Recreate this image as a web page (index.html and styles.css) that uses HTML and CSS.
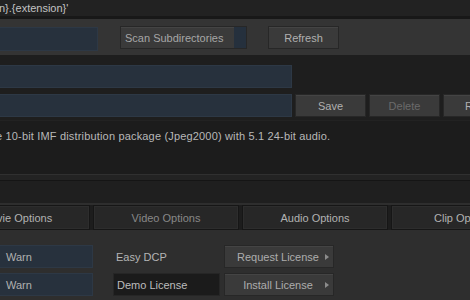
FILE: index.html
```html
<!DOCTYPE html>
<html>
<head>
<meta charset="utf-8">
<link rel="stylesheet" href="styles.css">
</head>
<body>
<div class="screen">
  <div class="pathbar"><span class="path">n}.{extension}'</span></div>

  <div class="toolbar">
    <div class="field dir"></div>
    <button class="btn scan"><span class="scan-label">Scan Subdirectories</span><span class="scan-on"></span></button>
    <button class="btn refresh">Refresh</button>
  </div>

  <div class="presets">
    <div class="preset-row">
      <div class="field preset"></div>
    </div>
    <div class="preset-row">
      <div class="field preset"></div>
      <button class="btn pbtn">Save</button>
      <button class="btn pbtn disabled">Delete</button>
      <button class="btn pbtn">Rename</button>
    </div>
  </div>

  <div class="desc"><span class="desc-text">e 10-bit IMF distribution package (Jpeg2000) with 5.1 24-bit audio.</span></div>

  <div class="sep"></div>
  <div class="emptybar"></div>

  <div class="tabs">
    <div class="tab">Movie Options</div>
    <div class="tab dim">Video Options</div>
    <div class="tab">Audio Options</div>
    <div class="tab">Clip Options</div>
  </div>

  <div class="options">
    <div class="opt-row">
      <div class="field warn">Warn</div>
      <div class="label">Easy DCP</div>
      <button class="btn lic">Request License<span class="arrow"></span></button>
    </div>
    <div class="opt-row">
      <div class="field warn">Warn</div>
      <div class="label demo">Demo License</div>
      <button class="btn lic">Install License<span class="arrow"></span></button>
    </div>
  </div>
</div>
</body>
</html>
```

FILE: styles.css
```css
* { box-sizing: border-box; }

body {
  margin: 0;
  background: #1f1f1f;
  font-family: "Liberation Sans", Arial, sans-serif;
  font-size: 11px;
  color: #bcbcbc;
}

.screen {
  width: 470px;
  height: 300px;
  overflow: hidden;
}

.pathbar {
  height: 19px;
  background: #222222;
  border-bottom: 3px solid #181818;
  line-height: 17px;
  white-space: nowrap;
  color: #c2c2c2;
}

.path { margin-left: -1px; }

.field {
  background: #27313d;
  border: 1px solid #2d3845;
}

.toolbar {
  height: 36px;
  background: #343434;
  display: flex;
  align-items: flex-start;
  padding-top: 7px;
}

.dir {
  width: 108px;
  height: 24px;
  margin-left: -10px;
  margin-top: 1px;
}

.btn {
  font: inherit;
  height: 23px;
  padding: 0;
  background: #3a3a3a;
  border: 1px solid #272727;
  box-shadow: inset 0 1px 0 #444444;
  color: #b0b0b0;
  display: flex;
  align-items: center;
  justify-content: center;
  white-space: nowrap;
  overflow: hidden;
}

.scan {
  width: 127px;
  margin-left: 22px;
  justify-content: space-between;
  align-items: stretch;
  color: #a6a6a6;
}

.scan-label {
  padding-left: 4px;
  display: flex;
  align-items: center;
}

.scan-on {
  width: 12px;
  background: #25303d;
}

.refresh {
  width: 71px;
  margin-left: 21px;
}

.presets {
  padding: 10px 0 3px;
  background: #1e1e1e;
}

.preset-row {
  display: flex;
  gap: 3px;
  height: 23px;
}

.preset-row + .preset-row {
  margin-top: 6px;
}

.preset {
  width: 302px;
  margin-left: -10px;
  flex: none;
  height: 23px;
}

.pbtn {
  width: 71px;
  flex: none;
  justify-content: center;
}

.pbtn:last-child {
  justify-content: flex-start;
  padding-left: 21px;
}

.disabled { color: #6a6a6a; }

.desc {
  height: 54px;
  background: #1c1c1c;
  border-top: 1px solid #222222;
  padding-top: 8px;
  line-height: 14px;
  white-space: nowrap;
  color: #b8b8b8;
}

.desc-text {
  margin-left: -4px;
  letter-spacing: 0.17px;
}

.sep {
  height: 7px;
  background: #232323;
  border-top: 1px solid #303030;
  border-bottom: 1px solid #151515;
}

.emptybar {
  height: 24px;
  background: #1f1f1f;
  border-bottom: 2px solid #2e2e2e;
}

.tabs {
  display: flex;
  gap: 3px;
  height: 25px;
  margin-left: -56px;
  background: #1d1d1d;
}

.tab {
  width: 146px;
  flex: none;
  background: #272727;
  border: 1px solid #161616;
  box-shadow: inset 0 0 0 1px #2d2d2d;
  display: flex;
  align-items: center;
  justify-content: center;
  color: #b2b2b2;
  white-space: nowrap;
}

.tab.dim { color: #878787; }

.options {
  height: 70px;
  background: #2e2e2e;
  padding-top: 15px;
}

.opt-row {
  display: flex;
  height: 23px;
}

.opt-row + .opt-row { margin-top: 5px; }

.warn {
  width: 103px;
  margin-left: -10px;
  flex: none;
  display: flex;
  align-items: center;
  padding-left: 15px;
  color: #b0b0b0;
}

.label {
  width: 107px;
  margin-left: 20px;
  flex: none;
  display: flex;
  align-items: center;
  padding-left: 3px;
  color: #b5b5b5;
}

.demo {
  background: #1b1b1b;
  border: 1px solid #262626;
  padding-left: 3px;
  color: #bdbdbd;
}

.lic {
  width: 110px;
  margin-left: 4px;
  flex: none;
  position: relative;
  padding-right: 2px;
  color: #adadad;
}

.arrow {
  position: absolute;
  right: 4px;
  top: 8px;
  width: 0;
  height: 0;
  border-top: 3px solid transparent;
  border-bottom: 3px solid transparent;
  border-left: 4px solid #8c8c8c;
}
```
